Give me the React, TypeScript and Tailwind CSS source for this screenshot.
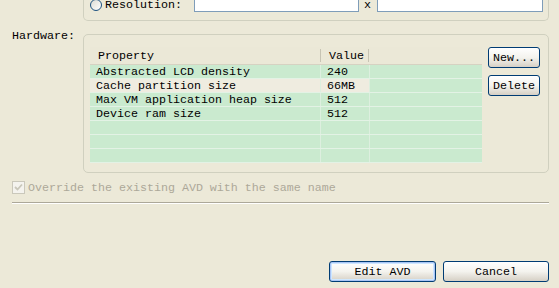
import React from "react";

const rows: [string, string, boolean][] = [
  ["Abstracted LCD density", "240", false],
  ["Cache partition size", "66MB", true],
  ["Max VM application heap size", "512", false],
  ["Device ram size", "512", false],
  ["", "", false],
  ["", "", false],
  ["", "", false],
];

function XpButton({ label, w, def }: { label: string; w: string; def?: boolean }) {
  return (
    <div
      className={`${w} h-[21px] rounded-[3px] border border-[#003C74] bg-gradient-to-b from-[#FFFFFF] via-[#F4F3EE] to-[#D6D0C5] flex items-center justify-center text-black ${
        def ? "shadow-[inset_0_0_0_1px_#A9C4F5,inset_0_0_0_2px_#CEE7FF]" : ""
      }`}
    >
      {label}
    </div>
  );
}

export default function App() {
  return (
    <div
      className="w-[559px] h-[288px] bg-[#ECE9D8] overflow-hidden flex flex-col text-[11.67px] leading-[14px] text-black"
      style={{ fontFamily: '"Liberation Mono", "DejaVu Sans Mono", monospace' }}
    >
      {/* top group (clipped) */}
      <div className="ml-[83px] w-[466px] h-[21px] shrink-0 border-l border-r border-b border-[#D0D0BF] rounded-b-[5px]">
        <div className="flex items-center h-[20px] -mt-[8px]">
          <div className="mt-[5px] ml-[6px] w-[12px] h-[12px] rounded-full border border-[#1C5180] bg-gradient-to-br from-[#DCDBD3] to-[#FFFFFF]" />
          <span className="mt-[5px] ml-[3px] w-[89px]">Resolution:</span>
          <div className="w-[165px] h-[20px] bg-white border border-[#7F9DB9]" />
          <span className="mt-[5px] ml-[5px] w-[13px]">x</span>
          <div className="w-[166px] h-[20px] bg-white border border-[#7F9DB9]" />
        </div>
      </div>

      {/* hardware */}
      <div className="flex items-start mt-[13px] shrink-0">
        <div className="w-[83px] pl-[12px] -mt-[5px]">Hardware:</div>
        <div className="w-[466px] h-[139px] border border-[#D0D0BF] rounded-[5px] flex pt-[12px] pl-[6px]">
          <div className="w-[392px] h-[116px] flex flex-col">
            <div className="h-[18px] flex items-center border-b border-[#D6D2C2] bg-[#EBE8D7]">
              <div className="w-[230px] pl-[8px] h-full flex items-center">Property</div>
              <div className="w-px h-[13px] bg-[#C7C4B4]" />
              <div className="w-[47px] pl-[8px] h-full flex items-center">Value</div>
              <div className="w-px h-[13px] bg-[#C7C4B4]" />
              <div className="flex-1" />
            </div>
            {rows.map(([p, v, sel], i) => (
              <div key={i} className="h-[14px] flex border-b border-[#E3F2E5]">
                <div className={`w-[231px] pl-[6px] border-r border-[#DDEFDF] ${sel ? "bg-[#EFECE0]" : "bg-[#CAEACF]"}`}>{p}</div>
                <div className={`w-[49px] pl-[6px] border-r border-[#DDEFDF] ${sel ? "bg-[#EFECE0]" : "bg-[#CAEACF]"}`}>{v}</div>
                <div className="flex-1 bg-[#CAEACF]" />
              </div>
            ))}
          </div>
          <div className="ml-[6px] flex flex-col gap-[7px]">
            <XpButton label="New..." w="w-[52px]" />
            <XpButton label="Delete" w="w-[52px]" />
          </div>
        </div>
      </div>

      {/* override */}
      <div className="flex items-center mt-[8px] h-[13px] pl-[12px] shrink-0">
        <div className="w-[13px] h-[13px] border border-[#CAC8BB] bg-[#F4F3EE] flex items-center justify-center">
          <svg width="9" height="9" viewBox="0 0 9 9">
            <path d="M1 4 L3.5 6.5 L8 1.5" stroke="#C9C7BA" strokeWidth="1.8" fill="none" />
          </svg>
        </div>
        <span className="ml-[3px] text-[#ACA899]">Override the existing AVD with the same name</span>
      </div>

      {/* separator */}
      <div className="mt-[8px] ml-[12px] w-[537px] h-[2px] border-t border-[#ACA899] border-b border-b-white shrink-0" />

      {/* bottom buttons */}
      <div className="mt-[57px] flex justify-end pr-[10px] gap-[7px] shrink-0">
        <XpButton label="Edit AVD" w="w-[107px]" def />
        <XpButton label="Cancel" w="w-[106px]" />
      </div>
    </div>
  );
}
